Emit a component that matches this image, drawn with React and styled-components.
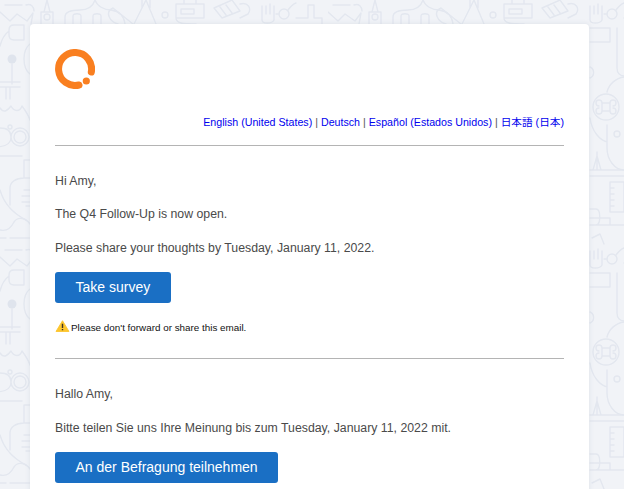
import React from 'react';
import styled, { createGlobalStyle } from 'styled-components';

const GlobalStyle = createGlobalStyle`
  html, body {
    margin: 0;
    padding: 0;
    background: #f1f3f7;
    font-family: "Liberation Sans", Arial, sans-serif;
  }
`;

const Page = styled.div`
  position: relative;
  height: 489px;
  overflow: hidden;
  padding: 24px 35px 0 30px;
  box-sizing: border-box;
`;

const Doodle = styled.svg`
  position: absolute;
  inset: 0;
  width: 100%;
  height: 100%;
`;

const Card = styled.main`
  position: relative;
  background: #fff;
  border-radius: 4px;
  padding: 25px 25px 0;
  height: 600px;
  box-shadow: 0 0 4px rgba(200, 207, 220, 0.5);
`;

const Logo = styled.svg`
  display: block;
  width: 40px;
  height: 40px;
`;

const Languages = styled.div`
  margin-top: 25px;
  text-align: right;
  font-size: 10.67px;
  line-height: 16px;
  color: #555;
  font-family: "Liberation Sans", "Noto Sans CJK JP", sans-serif;
`;

const LangLink = styled.a`
  color: #0000ee;
  text-decoration: none;
`;

const Rule = styled.hr`
  border: 0;
  height: 1px;
  background: #b4b4b4;
  margin: ${props => props.$top}px 0 0;
`;

const Para = styled.p`
  margin: ${props => props.$top}px 0 0;
  font-size: 12.3px;
  line-height: 16px;
  color: #4a4a4a;
`;

const Button = styled.a`
  display: block;
  width: fit-content;
  box-sizing: border-box;
  height: 31px;
  margin-top: 16px;
  padding: 0 20.5px;
  border-radius: 3px;
  background: #1a6fc4;
  color: #fff;
  font-size: 14px;
  line-height: 30px;
  text-decoration: none;
`;

const Notice = styled.div`
  display: flex;
  align-items: flex-end;
  margin-top: 17px;
  font-size: 9.85px;
  line-height: 14px;
  color: #111;
`;

const WarnIcon = styled.svg`
  width: 15px;
  height: 12px;
  margin: 0 1px 3px 0;
  flex: none;
`;

const tileLines = [
  // factory
  'M5 5H22M26 5C31 3 34 7 34 11M0 12L10 21L17 14L27 21L33 13L31 24',
  // tower
  'M47 0L44 12H50L47 0M41 12H53V24M41 12V24',
  // domed building
  'M65 24V17C65 11 72 10 80 10C88 10 93 6 95 0M95 0C97 6 104 10 111 10C119 11 124 16 125 24',
  'M73 24V16C73 13 81 13 81 16V24M93 24V16C93 13 101 13 101 16V24',
  // stem and loop
  'M113 8L133 24M113 8C104 12 110 22 118 24',
  // compass
  'M146 0L134 24M146 0L156 24M150 0V8M142 0V8',
  // box
  'M176 4H204V18H176ZM181 9H194V14H181ZM184 0V4M196 0V4M176 18C176 24 185 24 196 24',
  // tilted box
  'M214 8L232 0L240 11L222 18ZM220 7L226 15M226 5L232 13',
  'M240 4C248 2 252 8 248 14L240 18',
  // pipe
  'M296 18H308V5H314V18H322V24',
  // cup top left
  'M9 30C9 27 11 25 14 25H24V40H14C11 40 9 38 9 35ZM0 46C2 38 5 34 9 31',
  // flask
  'M12 64V84M-2 82H20M-2 87H20M6 87V99M10 87V99',
  'M0 108C4 114 8 110 11 106C14 112 20 112 22 106C25 110 28 114 30 120',
  'M30 44C22 50 22 68 30 74',
  // wheels
  'M0 128C6 128 11 130 11 137C11 146 2 147 -6 147M29 137A9 9 0 1 0 11 137A9 9 0 1 0 29 137M26 137A6 6 0 1 0 14 137A6 6 0 1 0 26 137',
  // lower left machine
  'M30 160H24V178H30M0 156H22M10 205V188C10 182 16 178 24 178M0 190C4 204 14 214 26 220',
  'M24 190H30M22 196H30M22 202H30M26 206H30',
  'M0 230C8 232 12 226 14 222C18 216 26 218 30 224M0 238H6M10 238H30',
  // hand
  'M262 6V20C262 24 272 24 274 20V6M266 6V14M270 4V14',
  'M279 14H276M288 10C291 6 293 4 296 3',
  // right side pipes
  'M262 28H282V42H262M289 28V68C289 73 292 76 296 76',
  'M262 67A6 6 0 0 1 262 78',
  'M279 92C281 84 288 78 296 77',
  'M274 103H282V111H274ZM274 103A3 3 0 1 0 271 106M282 103A3 3 0 1 1 285 106M274 111A3 3 0 1 1 271 108M282 111A3 3 0 1 0 285 108',
  'M279 125V148C279 160 287 170 296 170M262 118C264 132 272 140 279 142',
  // antenna and shelf
  'M269 152V170M265 170L269 156L273 170M262 170H296M262 176H296',
  // ruler
  'M282 182H296V212H282ZM282 188H286M282 194H286M282 200H286M282 206H286',
  'M262 209H268C273 209 273 225 268 225H262M262 218H282V225M262 225H296',
  'M264 238L272 234L276 244',
];

const strokeColor = '#e3e7ef';

const Background = () => (
  <Doodle aria-hidden="true">
    <defs>
      <pattern id="doodle" width="328" height="245" patternUnits="userSpaceOnUse">
        {tileLines.map(d => (
          <path key={d} d={d} fill="none" stroke={strokeColor} strokeWidth="1.4" strokeLinecap="round" strokeLinejoin="round" />
        ))}
        <circle cx="12" cy="59" r="4.5" fill="#dfe4ed" />
        <circle cx="165" cy="15" r="3" fill="none" stroke={strokeColor} strokeWidth="1.4" />
        <circle cx="284" cy="14" r="5" fill="none" stroke={strokeColor} strokeWidth="1.4" />
        <circle cx="278" cy="107" r="13" fill="none" stroke={strokeColor} strokeWidth="1.4" />
        <circle cx="289" cy="134" r="3" fill="none" stroke={strokeColor} strokeWidth="1.4" />
        <circle cx="10" cy="127" r="2" fill="none" stroke={strokeColor} strokeWidth="1.4" />
        <circle cx="47" cy="17" r="3" fill="none" stroke={strokeColor} strokeWidth="1.4" />
      </pattern>
    </defs>
    <rect width="100%" height="100%" fill="url(#doodle)" />
  </Doodle>
);

const BrandMark = () => (
  <Logo viewBox="0 0 40 40">
    <path d="M36.3 23A16.5 16.5 0 1 0 24 36" fill="none" stroke="#f97f20" strokeWidth="7" strokeLinecap="round" />
    <circle cx="31.3" cy="32" r="3.6" fill="#f97f20" />
  </Logo>
);

const languages = ['English (United States)', 'Deutsch', 'Español (Estados Unidos)', '日本語 (日本)'];

export default function App() {
  return (
    <Page>
      <GlobalStyle />
      <Background />
      <Card>
        <BrandMark />
        <Languages>
          {languages.map((lang, i) => (
            <React.Fragment key={lang}>
              {i > 0 && ' | '}
              <LangLink href="#">{lang}</LangLink>
            </React.Fragment>
          ))}
        </Languages>
        <Rule $top={15} />
        <Para $top={27}>Hi Amy,</Para>
        <Para $top={17}>The Q4 Follow-Up is now open.</Para>
        <Para $top={18}>Please share your thoughts by Tuesday, January 11, 2022.</Para>
        <Button href="#">Take survey</Button>
        <Notice>
          <WarnIcon viewBox="0 0 15 13">
            <path d="M7.5 0.8L14.5 12.4H0.5Z" fill="#fdc62e" stroke="#fdc62e" strokeLinejoin="round" />
            <path d="M7.5 4V8.6M7.5 9.8V11" stroke="#3a3326" strokeWidth="1.5" />
          </WarnIcon>
          Please don't forward or share this email.
        </Notice>
        <Rule $top={23} />
        <Para $top={27}>Hallo Amy,</Para>
        <Para $top={17.5}>Bitte teilen Sie uns Ihre Meinung bis zum Tuesday, January 11, 2022 mit.</Para>
        <Button href="#">An der Befragung teilnehmen</Button>
      </Card>
    </Page>
  );
}
